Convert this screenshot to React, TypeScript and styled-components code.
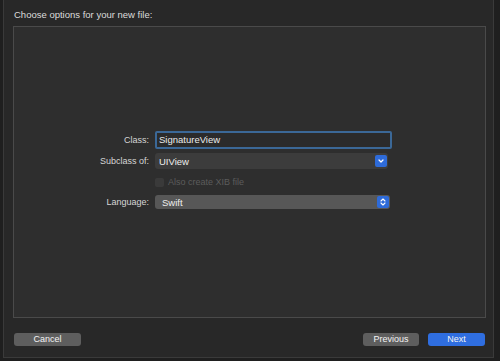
import styled, {createGlobalStyle} from "styled-components";

const GlobalStyle = createGlobalStyle`
  html, body {
    margin: 0;
    padding: 0;
    background: #1f1f1f;
  }
  body {
    font-family: "Liberation Sans", Arial, sans-serif;
    -webkit-font-smoothing: antialiased;
  }
`

const Screen = styled.div`
  width: 500px;
  height: 361px;
  background: #1f1f1f;
  display: flex;
  overflow: hidden;
`

const Sheet = styled.div`
  margin-left: 3px;
  width: 491px;
  height: 358px;
  box-sizing: border-box;
  border: 1px solid #3a3a3a;
  border-top: none;
  background: #282828;
  padding: 0 7px 0 9px;
  display: flex;
  flex-direction: column;
`

const Title = styled.div`
  height: 26px;
  box-sizing: border-box;
  padding: 9px 0 0 1px;
  font-size: 9.5px;
  line-height: 12px;
  color: #dcdcdc;
`

const Panel = styled.div`
  height: 292px;
  box-sizing: border-box;
  border: 1px solid #4a4a4a;
  background: #2e2e2e;
  padding-top: 104px;
  display: flex;
  flex-direction: column;
`

const Row = styled.div<{ $top: number; $height: number }>`
  display: flex;
  align-items: center;
  gap: 6px;
  margin-top: ${p => p.$top}px;
  height: ${p => p.$height}px;
`

const Label = styled.div`
  width: 135px;
  text-align: right;
  font-size: 9px;
  color: #d6d6d6;
`

const TextField = styled.div`
  width: 237px;
  height: 18px;
  box-sizing: border-box;
  border: 2px solid #3b6897;
  border-radius: 2px;
  background: #2b2b2b;
  font-size: 9.5px;
  line-height: 14px;
  color: #ececec;
  padding-left: 2px;
`

const Popup = styled.div<{ $width: number; $bg: string }>`
  width: ${p => p.$width}px;
  height: 100%;
  box-sizing: border-box;
  border-radius: 3px;
  background: ${p => p.$bg};
  display: flex;
  align-items: center;
  justify-content: space-between;
  padding: 0 1px 0 4px;
  font-size: 9.5px;
  color: #eeeeee;
`

const ArrowBox = styled.div`
  width: 12px;
  height: 12px;
  border-radius: 2px;
  background: #2e6bd9;
  display: flex;
  align-items: center;
  justify-content: center;
`

const CheckRow = styled.div`
  display: flex;
  align-items: center;
  gap: 4px;
  margin-left: 141px;
`

const CheckBox = styled.div`
  width: 9px;
  height: 9px;
  border-radius: 2px;
  background: #3a3a3a;
`

const CheckLabel = styled.div`
  font-size: 9px;
  color: #5c5c5c;
`

const Footer = styled.div`
  margin-top: 15px;
  display: flex;
  align-items: center;
  gap: 9px;
  padding: 0 1px;
`

const Button = styled.div<{ $primary?: boolean; $width: number }>`
  width: ${p => p.$width}px;
  height: 13px;
  border-radius: 3px;
  background: ${p => (p.$primary ? "#2f6ee0" : "#5e5e5e")};
  color: #f4f4f4;
  font-size: 9px;
  line-height: 13px;
  text-align: center;
`

const Spacer = styled.div`
  flex: 1;
`

const ChevronDown = () => (
    <svg width="8" height="8" viewBox="0 0 8 8">
        <path d="M2 3 L4 5 L6 3" fill="none" stroke="#fff" strokeWidth="1.2" strokeLinecap="round" strokeLinejoin="round"/>
    </svg>
)

const Stepper = () => (
    <svg width="8" height="10" viewBox="0 0 8 10">
        <path d="M2 4 L4 2 L6 4 M2 6 L4 8 L6 6" fill="none" stroke="#fff" strokeWidth="1.1" strokeLinecap="round" strokeLinejoin="round"/>
    </svg>
)

const App = () => {
    return (
        <Screen>
            <GlobalStyle/>
            <Sheet>
                <Title>Choose options for your new file:</Title>
                <Panel>
                    <Row $top={0} $height={18}>
                        <Label>Class:</Label>
                        <TextField>SignatureView</TextField>
                    </Row>
                    <Row $top={4} $height={16}>
                        <Label>Subclass of:</Label>
                        <Popup $width={233} $bg="#3c3c3c">
                            UIView
                            <ArrowBox><ChevronDown/></ArrowBox>
                        </Popup>
                    </Row>
                    <Row $top={8} $height={10}>
                        <CheckRow>
                            <CheckBox/>
                            <CheckLabel>Also create XIB file</CheckLabel>
                        </CheckRow>
                    </Row>
                    <Row $top={8} $height={14}>
                        <Label>Language:</Label>
                        <Popup $width={235} $bg="#575757">
                            <span style={{paddingLeft: 3}}>Swift</span>
                            <ArrowBox><Stepper/></ArrowBox>
                        </Popup>
                    </Row>
                </Panel>
                <Footer>
                    <Button $width={67}>Cancel</Button>
                    <Spacer/>
                    <Button $width={56}>Previous</Button>
                    <Button $width={57} $primary>Next</Button>
                </Footer>
            </Sheet>
        </Screen>
    )
}

export default App
